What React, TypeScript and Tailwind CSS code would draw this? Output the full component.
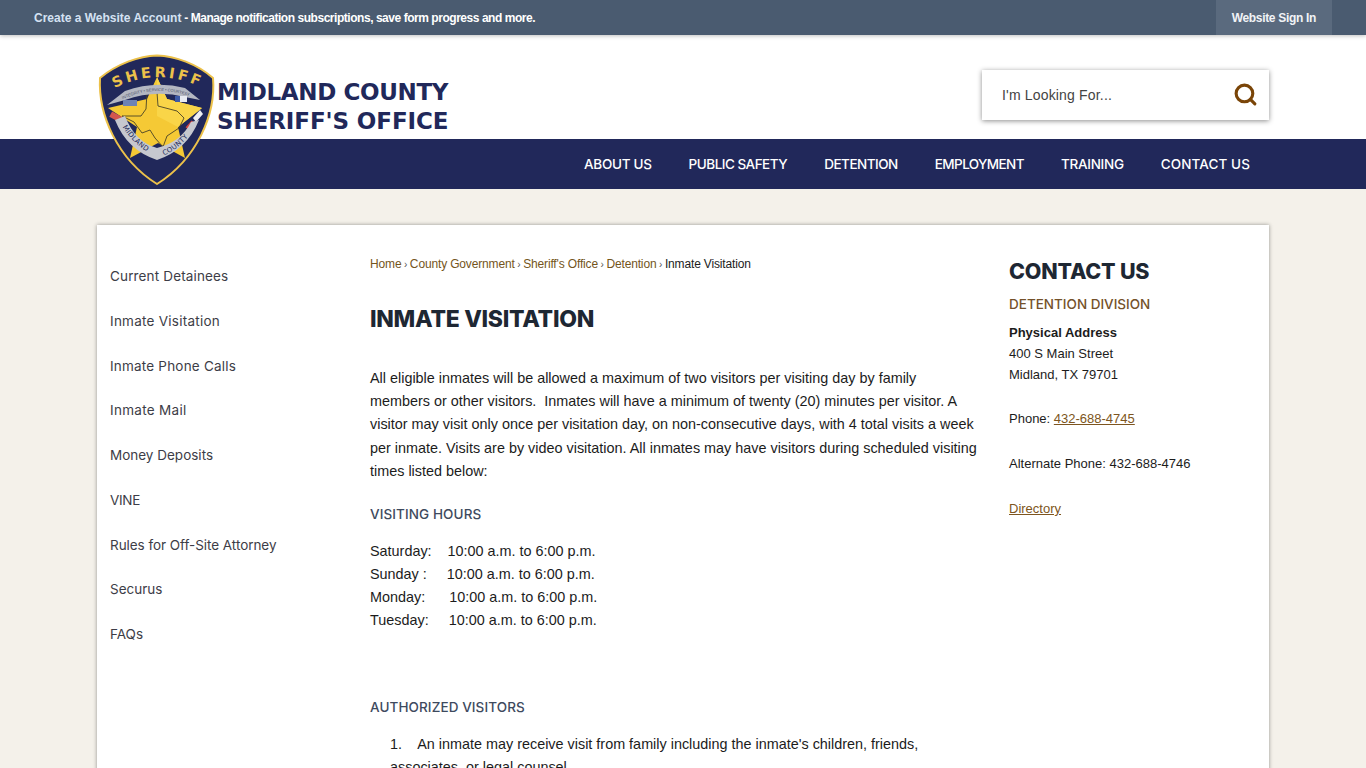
import React from 'react';
import { Search } from 'lucide-react';

const navItems = [
  { label: 'ABOUT US', cls: 'tracking-[-0.3px]' },
  { label: 'PUBLIC SAFETY', cls: 'tracking-[-0.5px]' },
  { label: 'DETENTION', cls: 'tracking-[-0.5px]' },
  { label: 'EMPLOYMENT', cls: 'tracking-[-0.6px]' },
  { label: 'TRAINING', cls: 'tracking-[-0.27px]' },
  { label: 'CONTACT US', cls: 'tracking-[0.1px]' },
];

const sideItems = [
  { label: 'Current Detainees', cls: 'tracking-[0.15px]' },
  { label: 'Inmate Visitation', cls: 'tracking-[0.25px]' },
  { label: 'Inmate Phone Calls', cls: 'tracking-[0.2px]' },
  { label: 'Inmate Mail', cls: 'tracking-[0.3px]' },
  { label: 'Money Deposits', cls: 'tracking-[0px]' },
  { label: 'VINE', cls: 'tracking-[-0.3px]' },
  { label: 'Rules for Off-Site Attorney', cls: 'tracking-[-0.05px]' },
  { label: 'Securus', cls: 'tracking-[0px]' },
  { label: 'FAQs', cls: 'tracking-[0px]' },
];

const crumbs = ['Home', 'County Government', "Sheriff's Office", 'Detention'];

const hours = [
  'Saturday:\u00a0\u00a0\u00a0\u00a010:00 a.m. to 6:00 p.m.',
  'Sunday :\u00a0\u00a0\u00a0\u00a0 10:00 a.m. to 6:00 p.m.',
  'Monday:\u00a0\u00a0\u00a0\u00a0\u00a0 10:00 a.m. to 6:00 p.m.',
  'Tuesday:\u00a0\u00a0\u00a0\u00a0 10:00 a.m. to 6:00 p.m.',
];

function Badge() {
  return (
    <svg viewBox="0 0 120 132" className="w-[120px] h-[132px]">
      <defs>
        <path id="topArc" d="M14 36 Q60 11 108 35" />
        <path id="ribbonArc" d="M16 50 Q58 26 102 46" />
        <path id="midlandArc" d="M25 72 Q37 92 58 102" />
        <path id="countyArc" d="M66 102 Q88 92 99 70" />
      </defs>
      {/* shield */}
      <path
        d="M60 1.5 C78 2 100 10 116 24 C119 60 100 105 60 130 C20 105 1 60 3 24 C20 10 42 2 60 1.5 Z"
        fill="#21285a"
        stroke="#ecc14a"
        strokeWidth="2"
      />
      <text fontFamily="'DejaVu Sans', sans-serif" fontWeight="700" fontSize="14.5" fill="#ecc14a" letterSpacing="3" textAnchor="middle">
        <textPath href="#topArc" startOffset="50%">SHERIFF</textPath>
      </text>
      {/* star */}
      <path
        d="M60 23 L70 45 L105 54 L81 73 L88 104 L61 89 L33 104 L40 73 L11 54 L50 45 Z"
        fill="#f5c935"
      />
      <path d="M60 23 L70 45 L105 54 L81 73 L60 62 Z" fill="#f9d548" />
      {/* texas outline */}
      <path
        d="M50 38 L60 38 L61 52 L80 57 L87 64 L82 74 L70 82 L66 93 L58 84 L53 76 L45 79 L37 68 L25 62 L44 62 L49 55 Z"
        fill="none"
        stroke="#4a4326"
        strokeWidth="0.9"
      />
      {/* top ribbon */}
      <path d="M10 51 L28 37 Q58 26 88 34 L103 46 L88 43 Q58 35 28 46 Z" fill="#b4b7c2" />
      <text fontFamily="'Liberation Sans', sans-serif" fontSize="4" fill="#4a4f68" textAnchor="middle">
        <textPath href="#ribbonArc" startOffset="50%">INTEGRITY • SERVICE • COURTESY</textPath>
      </text>
      {/* flags */}
      <rect x="26" y="46" width="14" height="6" fill="#6d83b5" />
      <rect x="78" y="42" width="12" height="6" fill="#e8eaf2" />
      <rect x="78" y="42" width="5" height="6" fill="#3c5aa8" />
      <rect x="13" y="60" width="13" height="6" fill="#d4564f" transform="rotate(28 19 63)" />
      <path d="M96 64 L103 56 L106 60 L99 68 Z" fill="#efeff3" />
      <rect x="88" y="70" width="9" height="3" fill="#d4453f" transform="rotate(-48 92 71)" />
      {/* bottom ribbon */}
      <path d="M18 66 L28 62 Q38 88 60 94 Q84 88 94 68 L102 66 Q90 96 60 106 Q30 96 18 66 Z" fill="#c6c8cf" />
      <text fontFamily="'DejaVu Sans', sans-serif" fontSize="7" fill="#21285a" letterSpacing="0.3">
        <textPath href="#midlandArc" startOffset="1">MIDLAND</textPath>
      </text>
      <text fontFamily="'DejaVu Sans', sans-serif" fontSize="7" fill="#21285a" letterSpacing="0.3">
        <textPath href="#countyArc" startOffset="1">COUNTY</textPath>
      </text>
    </svg>
  );
}

export default function App() {
  return (
    <div className="h-screen overflow-hidden bg-[#f4f1ea] font-['Liberation_Sans',Arial,sans-serif] text-[14.4px] text-[#1c1c1c]">
      {/* TOP BAR */}
      <div className="relative z-20 h-[35px] bg-[#4a5b70] shadow-[0_1px_4px_rgba(0,0,0,0.25)] flex items-center justify-between px-[34px] text-[12px] font-bold">
        <p>
          <span className="text-[#d5e2f3]">Create a Website Account</span>
          <span className="text-white tracking-[-0.46px]"> - Manage notification subscriptions, save form progress and more.</span>
        </p>
        <div className="h-full px-4 bg-[#5a6a7e] text-[#f1f3f6] tracking-[-0.32px] flex items-center">Website Sign In</div>
      </div>

      {/* HEADER */}
      <div className="relative bg-white h-[104px]">
        <div className="relative w-[1172px] mx-auto h-full flex items-start justify-between">
          <div className="absolute left-0 top-[19px] z-10">
            <Badge />
          </div>
          <div className="ml-[120px] mt-[43px] font-['DejaVu_Sans',sans-serif] font-bold text-[23px] leading-[28.5px] text-[#21285a]">
            <div className="tracking-[-0.35px]">MIDLAND COUNTY</div>
            <div className="tracking-[-0.1px]">SHERIFF'S OFFICE</div>
          </div>
          <div className="mt-[35px] ml-auto w-[287px] h-[50px] bg-white shadow-[0_1px_5px_rgba(0,0,0,0.45)] flex items-center justify-between pl-5 pr-[11px]">
            <span className="text-[14px] text-[#444444] tracking-[0.17px]">I'm Looking For...</span>
            <Search className="w-[25px] h-[25px] -mt-[2px] text-[#7a4508]" strokeWidth={3} />
          </div>
        </div>
      </div>

      {/* NAV */}
      <div className="h-[50px] bg-[#21285a]">
        <nav className="w-[1172px] mx-auto h-full flex items-center justify-end gap-[37px] pr-[19px] font-['Inter',sans-serif] text-[13.5px] font-medium text-white">
          {navItems.map((item) => (
            <span key={item.label} className={item.cls}>{item.label}</span>
          ))}
        </nav>
      </div>

      {/* CARD */}
      <main className="w-[1172px] h-[700px] mx-auto mt-9 bg-white shadow-[0_0_4px_rgba(0,0,0,0.4)] flex">
        <aside className="w-[273px] pl-[13px] pt-[41px] shrink-0">
          <ul className="font-['Inter',sans-serif] text-[13.5px] text-[#3d3d47] flex flex-col gap-[24.75px] leading-[20px]">
            {sideItems.map((item) => (
              <li key={item.label} className={item.cls}>{item.label}</li>
            ))}
          </ul>
        </aside>

        <section className="w-[610px] pt-[31px] shrink-0">
          <div className="text-[12px] tracking-[-0.15px] leading-[16px] text-[#1c1c1c]">
            {crumbs.map((c) => (
              <span key={c}>
                <span className="text-[#74551c]">{c}</span>
                <span className="text-[10px] text-[#555555]"> › </span>
              </span>
            ))}
            <span>Inmate Visitation</span>
          </div>
          <h1 className="mt-[30px] font-['Inter',sans-serif] text-[23px] tracking-[-0.28px] leading-[32px] font-extrabold text-[#1e2733]">
            INMATE VISITATION
          </h1>
          <p className="mt-[32px] leading-[23.2px]">
            All eligible inmates will be allowed a maximum of two visitors per visiting day by family<br />
            members or other visitors.&nbsp; Inmates will have a minimum of twenty (20) minutes per visitor. A<br />
            visitor may visit only once per visitation day, on non-consecutive days, with 4 total visits a week<br />
            per inmate. Visits are by video visitation. All inmates may have visitors during scheduled visiting<br />
            times listed below:
          </p>
          <h2 className="mt-[20px] font-['Inter',sans-serif] font-medium text-[13.5px] tracking-[0.1px] leading-[23px] text-[#3e4a5e]">VISITING HOURS</h2>
          <div className="mt-[14px] leading-[23px]">
            {hours.map((h) => (
              <div key={h}>{h}</div>
            ))}
          </div>
          <h2 className="mt-[64px] font-['Inter',sans-serif] font-medium text-[13.5px] tracking-[0.1px] leading-[23px] text-[#3e4a5e]">AUTHORIZED VISITORS</h2>
          <p className="mt-[14px] ml-[20px] leading-[23px]">
            1.&nbsp;&nbsp;&nbsp; An inmate may receive visit from family including the inmate's children, friends,<br />
            associates, or legal counsel.
          </p>
        </section>

        <aside className="ml-[29px] pt-[32px] flex-1 text-[13px]">
          <h2 className="font-['Inter',sans-serif] text-[21.5px] tracking-[-0.2px] leading-[28px] font-extrabold text-[#1e2733]">CONTACT US</h2>
          <h3 className="mt-[7px] font-['Inter',sans-serif] text-[13.5px] leading-[24px] font-medium text-[#74512a]">
            DETENTION DIVISION
          </h3>
          <div className="mt-[6px] leading-[21px]">
            <div className="font-bold">Physical Address</div>
            <div>400 S Main Street</div>
            <div>Midland, TX 79701</div>
          </div>
          <p className="mt-[23px] leading-[21px]">
            Phone: <span className="underline text-[#7d5520]">432-688-4745</span>
          </p>
          <p className="mt-[24px] leading-[21px]">Alternate Phone: 432-688-4746</p>
          <p className="mt-[24px] leading-[21px]">
            <span className="underline text-[#7d5520]">Directory</span>
          </p>
        </aside>
      </main>
    </div>
  );
}
